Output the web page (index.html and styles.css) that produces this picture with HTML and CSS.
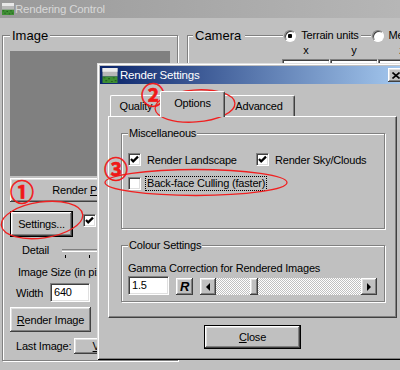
FILE: index.html
```html
<!DOCTYPE html>
<html lang="en">
<head>
    <meta charset="UTF-8">
    <title>Rendering Control</title>
    <link rel="stylesheet" href="styles.css">
</head>
<body>

    <div class="window">
        <div class="caption">
            <svg class="app-icon" width="12" height="14" viewBox="0 0 16 16">
                <rect width="16" height="9" fill="#b8b8b8"/>
                <rect width="16" height="4" fill="#e8e8e8"/>
                <rect y="9" width="16" height="7" fill="#3f8f34"/>
                <path d="M1 10h2v1H1zM6 11h2v1H6zM11 10h2v1h-2zM3 13h2v1H3zM9 14h2v1H9zM13 13h2v1h-2z" fill="#1c5418"/>
            </svg>
            <span class="caption-text">Rendering Control</span>
        </div>

        <div class="client">
            <fieldset class="group image-group">
                <legend class="big-legend">Image</legend>
                <div class="preview"></div>
                <button class="btn preview-btn"><span>Render <u>P</u>review</span></button>
                <div class="settings-row">
                    <button class="btn default settings-btn"><span>Settings...</span></button>
                    <span class="check on"><svg width="11" height="11" viewBox="0 0 11 11"><polyline points="2,5 4.2,7.4 9,2.6" fill="none" stroke="#000" stroke-width="2.2"/></svg></span>
                    <span class="check-text">Auto</span>
                </div>
                <div class="detail-row">
                    <span class="detail-label">Detail</span>
                    <span class="slider"><span class="slider-track"></span><span class="slider-ticks"></span></span>
                </div>
                <div class="size-label">Image Size (in pixels)</div>
                <div class="size-row">
                    <span class="size-name">Width</span>
                    <span class="field size-field">640</span>
                    <span class="size-name">Height</span>
                </div>
                <button class="btn render-btn"><span><u>R</u>ender Image</span></button>
                <div class="last-row">
                    <span class="last-label">Last Image:</span>
                    <button class="btn view-btn"><span><u>V</u>iew</span></button>
                </div>
            </fieldset>

            <fieldset class="group camera-group">
                <legend class="big-legend">
                    <span class="legend-row">
                        <span>Camera</span>
                        <span class="legend-line long"></span>
                        <span class="radio on"></span>
                        <span class="radio-text">Terrain units</span>
                        <span class="legend-line short"></span>
                        <span class="radio"></span>
                        <span class="radio-text">Metres</span>
                    </span>
                </legend>
                <div class="axes"><span>x</span><span>y</span><span>z</span></div>
                <div class="axes coords">
                    <span class="field"></span>
                    <span class="field"></span>
                    <span class="field"></span>
                </div>
            </fieldset>
        </div>
    </div>

    <div class="dialog">
        <div class="caption active">
            <svg class="dialog-icon" width="16" height="15" viewBox="0 0 16 16">
                <rect width="16" height="9" fill="#b8b8b8"/>
                <rect width="16" height="4" fill="#ececec"/>
                <rect y="9" width="16" height="7" fill="#3f8f34"/>
                <path d="M1 10h2v1H1zM6 11h2v1H6zM11 10h2v1h-2zM3 13h2v1H3zM9 14h2v1H9zM13 13h2v1h-2z" fill="#1c5418"/>
            </svg>
            <span class="caption-text">Render Settings</span>
            <span class="btn caption-close">
                <svg width="8" height="7" viewBox="0 0 8 7"><path d="M0.5 0.5L7.5 6.5M7.5 0.5L0.5 6.5" stroke="#000" stroke-width="1.6"/></svg>
            </span>
        </div>

        <div class="dialog-body">
            <div class="tabs">
                <div class="tab quality-tab">Quality</div>
                <div class="tab active options-tab">Options</div>
                <div class="tab advanced-tab">Advanced</div>
            </div>

            <div class="tab-panel">
                <fieldset class="group misc-group">
                    <legend>Miscellaneous</legend>
                    <div class="check-row">
                        <span class="check-item wide">
                            <span class="check on"><svg width="11" height="11" viewBox="0 0 11 11"><polyline points="2,5 4.2,7.4 9,2.6" fill="none" stroke="#000" stroke-width="2.2"/></svg></span>
                            <span>Render Landscape</span>
                        </span>
                        <span class="check-item">
                            <span class="check on"><svg width="11" height="11" viewBox="0 0 11 11"><polyline points="2,5 4.2,7.4 9,2.6" fill="none" stroke="#000" stroke-width="2.2"/></svg></span>
                            <span>Render Sky/Clouds</span>
                        </span>
                    </div>
                    <div class="check-row second">
                        <span class="check-item">
                            <span class="check"></span>
                            <span class="focus">Back-face Culling (faster)</span>
                        </span>
                    </div>
                </fieldset>

                <fieldset class="group colour-group">
                    <legend>Colour Settings</legend>
                    <div class="gamma-label">Gamma Correction for Rendered Images</div>
                    <div class="gamma-row">
                        <span class="field gamma-field">1.5</span>
                        <button class="btn reset-btn">R</button>
                        <div class="hscroll">
                            <span class="btn arrow left"></span>
                            <span class="track"><span class="btn thumb"></span></span>
                            <span class="btn arrow right"></span>
                        </div>
                    </div>
                </fieldset>
            </div>

            <button class="btn default close-btn"><span><u>C</u>lose</span></button>
        </div>
    </div>

    <!-- red notes drawn on top of the screenshot -->
    <svg class="notes" width="400" height="370">
        <ellipse cx="42" cy="220" rx="41" ry="18" transform="rotate(-8 42 220)"/>
        <ellipse cx="195" cy="106" rx="40" ry="16" transform="rotate(-4 195 106)"/>
        <ellipse cx="196" cy="182.5" rx="91" ry="13"/>
    </svg>
    <span class="mark mark-1">①</span>
    <span class="mark mark-2">②</span>
    <span class="mark mark-3">③</span>

</body>
</html>
```

FILE: styles.css
```css
/* Classic grey desktop, one window with a dialog on top */
html, body {
    margin: 0;
    height: 100%;
}

body {
    width: 400px;
    height: 370px;
    overflow: hidden;
    position: relative;
    background-color: #c0c0c0;
    font: 11px "Liberation Sans", Arial, sans-serif;
    letter-spacing: -0.2px;
    white-space: nowrap;
    color: #000;
}

/* ---- shared controls ---- */
.btn {
    display: inline-flex;
    align-items: center;
    justify-content: center;
    box-sizing: border-box;
    padding: 0;
    margin: 0;
    border: none;
    background-color: #c0c0c0;
    font: inherit;
    letter-spacing: inherit;
    color: #000;
    box-shadow: inset -1px -1px #404040, inset 1px 1px #fff, inset -2px -2px #808080, inset 2px 2px #dfdfdf;
}

.btn.default {
    border: 1px solid #000;
}

.field {
    display: inline-block;
    box-sizing: border-box;
    background-color: #fff;
    border: 1px solid;
    border-color: #808080 #fff #fff #808080;
    box-shadow: inset 1px 1px #404040, inset -1px -1px #dfdfdf;
    padding: 1px 3px;
    line-height: 15px;
}

.check {
    display: inline-flex;
    align-items: center;
    justify-content: center;
    flex-shrink: 0;
    box-sizing: border-box;
    width: 13px;
    height: 13px;
    background-color: #fff;
    border: 1px solid;
    border-color: #808080 #fff #fff #808080;
    box-shadow: inset 1px 1px #404040, inset -1px -1px #dfdfdf;
}

.radio {
    display: inline-block;
    flex-shrink: 0;
    box-sizing: border-box;
    width: 12px;
    height: 12px;
    border-radius: 50%;
    background-color: #fff;
    border: 1px solid;
    border-color: #808080 #fff #fff #808080;
    box-shadow: inset 1px 1px #404040;
}

.radio.on {
    background: radial-gradient(circle, #000 0 2px, #fff 2.5px);
}

/* etched group box */
.group {
    margin: 0;
    min-width: 0;
    box-sizing: border-box;
    border: 1px solid #808080;
    box-shadow: inset 1px 1px #fff, 1px 1px #fff;
}

.group legend {
    padding: 0 1px;
    line-height: 14px;
    background-color: #c0c0c0;
}

.group .big-legend {
    font-size: 13px;
    letter-spacing: 0;
    line-height: 15px;
    padding: 0 2px;
}

/* ---- window caption ---- */
.caption {
    display: flex;
    align-items: center;
    height: 18px;
    padding-left: 2px;
    gap: 1px;
    background: linear-gradient(to right, #9a9a9a, #b6b6b6);
    color: #d8d8d8;
    font-size: 11.5px;
}

.caption.active {
    background: linear-gradient(to right, #0a246a, #a6caf0);
    color: #fff;
    gap: 2px;
}

.caption-close {
    width: 16px;
    height: 14px;
    margin-left: auto;
    margin-right: 2px;
}

/* ---- background window ---- */
.client {
    display: flex;
    align-items: flex-start;
    gap: 9px;
    padding: 10px 0 0 2px;
}

.image-group {
    flex-shrink: 0;
    width: 176px;
    padding: 8px 7px 6px 7px;
}

.preview {
    height: 125px;
    background-color: #808080;
}

.preview-btn {
    width: 160px;
    height: 24px;
    margin-top: 2px;
}

.settings-row {
    display: flex;
    align-items: flex-start;
    margin-top: 9px;
}

.settings-btn {
    width: 63px;
    height: 26px;
}

.settings-row .check {
    margin: 3px 0 0 10px;
}

.check-text {
    margin: 2px 0 0 5px;
}

.detail-row {
    display: flex;
    align-items: flex-start;
    margin-top: 6px;
    line-height: 15px;
}

.detail-label {
    width: 41px;
    padding-left: 12px;
}

.slider {
    display: flex;
    flex-direction: column;
    width: 110px;
    margin-top: 6px;
}

.slider-track {
    height: 1px;
    border-top: 1px solid #808080;
    border-bottom: 1px solid #fff;
}

.slider-ticks {
    height: 3px;
    margin: 3px 0 0 3px;
    background: repeating-linear-gradient(to right, #000 0 1px, transparent 1px 24px);
}

.size-label {
    margin-top: 7px;
    padding-left: 8px;
    line-height: 15px;
}

.size-row {
    display: flex;
    align-items: center;
    margin-top: 3px;
}

.size-name {
    width: 40px;
    padding-left: 6px;
    box-sizing: border-box;
}

.size-field {
    width: 40px;
    height: 19px;
    margin-right: 6px;
}

.render-btn {
    width: 81px;
    height: 25px;
    margin-top: 5px;
}

.last-row {
    display: flex;
    align-items: center;
    margin-top: 6px;
}

.last-label {
    width: 64px;
    padding-left: 6px;
    box-sizing: border-box;
}

.view-btn {
    width: 60px;
    height: 16px;
}

.camera-group {
    flex-shrink: 0;
    width: 260px;
    padding: 1px 0 20px 5px;
}

.legend-row {
    display: inline-flex;
    align-items: center;
}

.legend-line {
    height: 0;
    border-top: 1px solid #808080;
    border-bottom: 1px solid #fff;
}

.legend-line.long {
    width: 38px;
    margin: 0 1px 0 4px;
}

.legend-line.short {
    width: 10px;
    margin: 0 1px 0 2px;
}

.radio-text {
    margin-left: 5px;
    font-size: 11px;
    letter-spacing: -0.2px;
}

.axes {
    display: grid;
    grid-template-columns: repeat(3, 48px);
    margin-left: 89px;
    text-align: center;
    line-height: 13px;
}

.coords {
    margin-top: 2px;
}

.coords .field {
    height: 20px;
}

/* ---- dialog ---- */
.dialog {
    position: absolute;
    left: 97px;
    top: 63px;
    width: 312px;
    height: 297px;
    box-sizing: border-box;
    padding: 3px;
    background-color: #c0c0c0;
    box-shadow: inset 1px 1px #dfdfdf, inset -1px -1px #000, inset 2px 2px #fff, inset -2px -2px #808080;
}

.dialog-body {
    padding: 7px 0 0 8px;
}

.tabs {
    display: flex;
    align-items: flex-end;
    height: 25px;
    padding-left: 2px;
}

.tab {
    box-sizing: border-box;
    height: 21px;
    padding-top: 3px;
    text-align: center;
    line-height: 15px;
    border-top: 1px solid #fff;
    border-left: 1px solid #fff;
    border-right: 1px solid #404040;
    border-radius: 2px 2px 0 0;
    box-shadow: inset -1px 0 #808080;
}

.quality-tab {
    width: 52px;
}

.advanced-tab {
    width: 72px;
}

.tab.active {
    width: 65px;
    height: 26px;
    margin: 0 -2px -1px -2px;
    padding-top: 4px;
    position: relative;
    z-index: 1;
    background-color: #c0c0c0;
}

.tab-panel {
    box-sizing: border-box;
    width: 289px;
    height: 202px;
    padding: 9px 11px 0 12px;
    border: 1px solid;
    border-color: #fff #404040 #404040 #fff;
    box-shadow: inset -1px -1px #808080;
}

.misc-group {
    padding: 12px 6px 37px 6px;
}

.check-row {
    display: flex;
    align-items: center;
    height: 15px;
}

.check-row.second {
    margin-top: 9px;
}

.check-item {
    display: flex;
    align-items: center;
    gap: 6px;
}

.check-item.wide {
    width: 128px;
}

.focus {
    outline: 1px dotted #000;
    margin-left: -1px;
    padding: 0 1px;
    line-height: 13px;
}

.colour-group {
    margin-top: 9px;
    padding: 9px 6px 6px 6px;
}

.gamma-label {
    line-height: 15px;
}

.gamma-row {
    display: flex;
    align-items: flex-end;
    height: 19px;
}

.gamma-field {
    width: 41px;
    height: 19px;
}

.reset-btn {
    width: 17px;
    height: 17px;
    margin-left: 7px;
    font: italic bold 13px "Liberation Sans", Arial, sans-serif;
}

.hscroll {
    display: flex;
    width: 177px;
    height: 17px;
    margin-left: 7px;
}

.arrow {
    width: 16px;
    height: 17px;
}

.arrow::after {
    content: "";
    border-style: solid;
    border-color: transparent;
}

.arrow.left::after {
    border-width: 4px 4px 4px 0;
    border-right-color: #000;
}

.arrow.right::after {
    border-width: 4px 0 4px 4px;
    border-left-color: #000;
}

.track {
    flex: 1;
    display: flex;
    background: repeating-conic-gradient(#fff 0 25%, #c0c0c0 0 50%) 0 0 / 2px 2px;
}

.thumb {
    width: 8px;
    height: 17px;
    margin-left: 34px;
}

.close-btn {
    width: 97px;
    height: 24px;
    margin: 7px 0 0 96px;
}

/* ---- red notes ---- */
.notes {
    position: absolute;
    left: 0;
    top: 0;
    pointer-events: none;
}

.notes ellipse {
    fill: none;
    stroke: #f02020;
    stroke-width: 1.3;
}

.mark {
    position: absolute;
    color: #f01818;
    font: bold 24px/1 "Noto Sans CJK JP", sans-serif;
    -webkit-text-stroke: 0.6px #f01818;
}

.mark-1 {
    left: 10px;
    top: 179px;
}

.mark-2 {
    left: 141px;
    top: 82px;
}

.mark-3 {
    left: 104px;
    top: 156px;
}
```
